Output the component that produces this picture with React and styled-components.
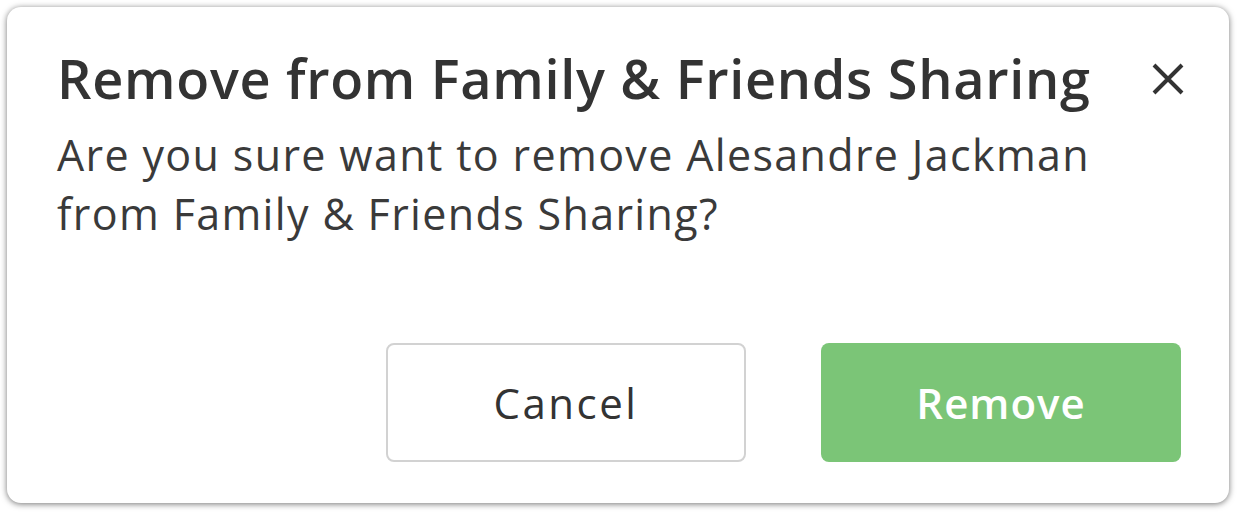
import React from 'react';
import styled, { createGlobalStyle } from 'styled-components';

const GlobalStyle = createGlobalStyle`
  html, body {
    margin: 0;
    padding: 0;
    background: #ffffff;
  }
  body {
    font-family: "Open Sans", Lato, Arial, sans-serif;
  }
`;

const Page = styled.div`
  width: 1237px;
  height: 513px;
  padding: 7px 8px 10px 7px;
  box-sizing: border-box;
`;

const Dialog = styled.div`
  width: 1222px;
  height: 496px;
  box-sizing: border-box;
  background: #ffffff;
  border-radius: 14px;
  box-shadow: 0 1px 6px rgba(0, 0, 0, 0.55);
  padding: 36px 44px 41px 50px;
  display: flex;
  flex-direction: column;
`;

const Header = styled.div`
  display: flex;
  align-items: flex-start;
  justify-content: space-between;
`;

const Title = styled.h2`
  margin: 0;
  font-size: 54px;
  font-weight: 600;
  line-height: 70px;
  letter-spacing: 0.7px;
  color: #333333;
`;

const CloseButton = styled.button`
  border: none;
  background: none;
  padding: 0;
  margin: 19px 0 0 0;
  width: 34px;
  height: 34px;
  cursor: pointer;
  display: flex;
  align-items: center;
  justify-content: center;
`;

const Message = styled.p`
  margin: 12px 0 0;
  font-size: 43px;
  line-height: 59px;
  letter-spacing: 1.35px;
  color: #3a3a3a;
  max-width: 1060px;
`;

const Actions = styled.div`
  margin-top: auto;
  margin-right: 4px;
  display: flex;
  justify-content: flex-end;
  gap: 75px;
`;

const Button = styled.button`
  width: 360px;
  height: 119px;
  box-sizing: border-box;
  border-radius: 8px;
  font-family: inherit;
  font-size: 42px;
  cursor: pointer;
  border: ${(p) => (p.primary ? 'none' : '2px solid #d2d2d2')};
  background: ${(p) => (p.primary ? '#7bc577' : '#ffffff')};
  color: ${(p) => (p.primary ? '#ffffff' : '#333333')};
  font-weight: ${(p) => (p.primary ? 600 : 400)};
  letter-spacing: ${(p) => (p.primary ? '1px' : '2.5px')};
`;

function CloseIcon() {
  return (
    <svg width="34" height="34" viewBox="0 0 34 34">
      <path d="M3 3 L31 31 M31 3 L3 31" stroke="#333" strokeWidth="4" />
    </svg>
  );
}

export default function App() {
  return (
    <Page>
      <GlobalStyle />
      <Dialog>
        <Header>
          <Title>Remove from Family &amp; Friends Sharing</Title>
          <CloseButton aria-label="Close">
            <CloseIcon />
          </CloseButton>
        </Header>
        <Message>
          Are you sure want to remove Alesandre Jackman from Family &amp; Friends Sharing?
        </Message>
        <Actions>
          <Button>Cancel</Button>
          <Button primary>Remove</Button>
        </Actions>
      </Dialog>
    </Page>
  );
}
